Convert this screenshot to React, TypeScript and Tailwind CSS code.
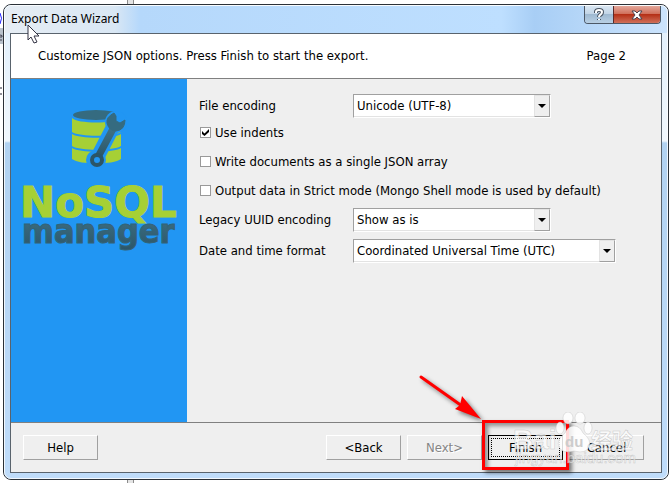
import { useState } from 'react'
import type { ReactNode } from 'react'
import { clsx } from 'clsx'

const BODY_FONT = "font-['Tahoma','DejaVu_Sans_Condensed','DejaVu_Sans',sans-serif]"

interface SelectRowProps {
  id: string
  label: string
  options: string[]
  wide?: boolean
}

function SelectRow({ id, label, options, wide }: SelectRowProps) {
  const [value, setValue] = useState(options[0])
  return (
    <div className="flex items-center">
      <label htmlFor={id} className="w-[154px] shrink-0">{label}</label>
      <div
        className={clsx(
          'relative h-6 border border-t-[#a0a0a0] border-l-[#a0a0a0] border-r-white border-b-white bg-white',
          wide ? 'w-[263px]' : 'w-[198px]'
        )}
      >
        <select
          id={id}
          value={value}
          onChange={e => setValue(e.target.value)}
          className="block h-full w-full appearance-none border-b border-[#e3e3e3] bg-white pl-[3px] pr-5 leading-5 outline-none"
        >
          {options.map(o => <option key={o}>{o}</option>)}
        </select>
        <span className="pointer-events-none absolute top-0 right-0 bottom-0 flex w-4 items-center justify-center border border-t-[#e3e3e3] border-l-[#e3e3e3] border-r-[#a0a0a0] border-b-[#a0a0a0] bg-[#efefef]">
          <svg width="8" height="4" viewBox="0 0 8 4" aria-hidden="true">
            <path d="M0 0h8L4 4z" fill="#000" />
          </svg>
        </span>
      </div>
    </div>
  )
}

function CheckRow({ label, checked: initial = false }: { label: string; checked?: boolean }) {
  const [checked, setChecked] = useState(initial)
  return (
    <label className="flex h-[29px] items-center gap-1">
      <span className="relative ml-px size-[11px]">
        <input
          type="checkbox"
          checked={checked}
          onChange={e => setChecked(e.target.checked)}
          className="block size-[11px] appearance-none border border-[#999] bg-white"
        />
        {checked && (
          <svg className="pointer-events-none absolute inset-0" width="11" height="11" viewBox="0 0 11 11" aria-hidden="true">
            <path d="M2 4l2.500 2.500L9 2v3L4.500 9 2 7z" fill="#000" />
          </svg>
        )}
      </span>
      {label}
    </label>
  )
}

function WizardButton({ children, disabled, focused }: { children: ReactNode; disabled?: boolean; focused?: boolean }) {
  return (
    <button
      disabled={disabled}
      className={clsx(
        'h-[25px] w-[75px] border bg-[#efefef]',
        focused
          ? 'border-black p-[2px]'
          : 'border-t-white border-l-white border-r-[#a0a0a0] border-b-[#a0a0a0]',
        disabled && 'text-[#858585] [text-shadow:1px_1px_0_white]'
      )}
    >
      {focused ? (
        <span className="flex h-full items-center justify-center border border-dotted border-black">{children}</span>
      ) : children}
    </button>
  )
}

function Logo() {
  return (
    <svg width="176" height="152" viewBox="0 0 176 152" aria-label="NoSQL manager">
      <defs>
        <linearGradient id="steel" x1="0" y1="0" x2="0" y2="1">
          <stop offset="0" stopColor="#3f7388" />
          <stop offset="1" stopColor="#2b5567" />
        </linearGradient>
      </defs>
      <g fill="#a6d035">
        <path d="M61 18c5 6 43 6 49 0v14c-8 5-41 5-49 0z" />
        <path d="M61 34c8 5 41 5 49 0v12c-8 5-41 5-49 0z" />
        <path d="M61 48c8 5 41 5 49 0v11c-8 6-41 6-49 0z" />
      </g>
      <ellipse cx="85" cy="15" rx="23" ry="5" fill="#356b80" />
      <g strokeLinejoin="round">
        <path d="M86 58 102 27" stroke="#2196f3" strokeWidth="14" strokeLinecap="round" />
        <circle cx="85" cy="60" r="10" fill="#2196f3" />
        <circle cx="105" cy="22" r="11" fill="#2196f3" />
        <path d="M87 57 103 27" stroke="url(#steel)" strokeWidth="7" />
        <path d="M103 13q-8 4-7 10 2 8 9 8 9-1 9-11l-5 3-4-2v-5z" fill="#356b80" stroke="#356b80" />
        <circle cx="86" cy="60" r="5" fill="#2196f3" stroke="#2b5567" strokeWidth="4" />
      </g>
      <g fontWeight="bold">
        <text x="9" y="117" fontFamily="DejaVu Sans, sans-serif" fontSize="42" fill="#a6d035" stroke="#a6d035">NoSQL</text>
        <text x="11" y="143" fontFamily="DejaVu Sans Condensed, DejaVu Sans, sans-serif" fontSize="34" fill="url(#steel)" stroke="#336378">manager</text>
      </g>
    </svg>
  )
}

function Watermark() {
  return (
    <svg
      className="pointer-events-none absolute -right-[76px] -bottom-2"
      width="130"
      height="56"
      viewBox="0 0 130 56"
      aria-hidden="true"
    >
      <g fill="#fff" fillOpacity=".65" stroke="#aaa" strokeOpacity=".6" strokeWidth=".5">
        <text x="4" y="37" fontSize="28" fontFamily="Liberation Sans, sans-serif" fontWeight="bold">Bai</text>
        <g fillOpacity=".85">
          <ellipse cx="51" cy="16" rx="4" ry="6" />
          <ellipse cx="59" cy="6" rx="5" ry="6" />
          <ellipse cx="71" cy="6" rx="5" ry="6" />
          <ellipse cx="79" cy="16" rx="4" ry="6" />
          <path d="M65 14q6 0 9 7 9 7 6 14-3 7-15 4-12 3-15-4-3-7 6-14 3-7 9-7z" />
        </g>
        <text x="82" y="36" fontSize="21" fontFamily="'Noto Sans CJK SC', sans-serif" fontWeight="bold">经验</text>
        <text x="6" y="51" fontSize="15" fontFamily="Liberation Sans, sans-serif">jingyan.baidu.com</text>
      </g>
      <text x="56" y="35" fontSize="15" fill="#ccc" fontFamily="Liberation Sans, sans-serif" fontWeight="bold">du</text>
    </svg>
  )
}

function Callout() {
  return (
    <>
      <svg className="pointer-events-none absolute right-[80px] bottom-[38px] drop-shadow-[3px_3px_2px_rgba(0,0,0,0.5)]" width="64" height="50" viewBox="0 0 64 50" aria-hidden="true">
        <path d="M2 5 43 34" stroke="#f00" strokeWidth="3" strokeLinecap="round" />
        <path d="M62 47 36 37l5-4 2-9z" fill="#f00" />
      </svg>
      <span className="pointer-events-none absolute -inset-x-[6px] -top-[15px] -bottom-[10px] border-[3px] border-[#f00] shadow-[3px_3px_4px_rgba(0,0,0,0.5),inset_3px_3px_4px_rgba(0,0,0,0.4)]" />
    </>
  )
}

function Cursor() {
  return (
    <svg className="pointer-events-none absolute top-[18px] left-[22px] z-10" width="13" height="20" viewBox="0 0 13 20" aria-hidden="true">
      <path d="M1 1v15l3-3 3 6 3-1-3-6h5z" fill="#fff" stroke="#334" strokeLinejoin="round" />
    </svg>
  )
}

// edge of the scroll bar that sticks out behind the dialog
function ScrollEdge() {
  return <div className="ml-[127px] w-[7px] border-x border-[#8c8c8c] bg-[#e4e4e4]" />
}

export default function App() {
  return (
    <div className={clsx('flex min-h-screen flex-col bg-white text-[13px] leading-4 text-black', BODY_FONT)}>
      <div className="flex h-1"><ScrollEdge /></div>
      <div className="flex flex-1 pr-[3px]">
        <svg width="3" height="100" viewBox="0 0 3 100" aria-hidden="true">
          <path d="M0 9q3 5 0 11" fill="none" stroke="#22f" />
          <path d="M0 24h3v16H0z" fill="#b9c2cc" />
          <path d="M0 31q3 0 2 2H0M0 36h2" fill="none" stroke="#445" />
          <path d="M0 84h2M0 90h2" stroke="#223" />
        </svg>
        <div className="flex flex-1 flex-col rounded-lg border border-[#2b3138] bg-[linear-gradient(#e0effc,#f0f7fd_136px,#b1d2f1_138px,#bfdcfa)]">
          <div className="flex flex-1 flex-col rounded-[7px] border border-white/80 px-[5px] pb-[5px]">
            <header className="relative -mx-[5px] flex h-[27px] items-start rounded-t-md bg-[linear-gradient(90deg,#e6edf4,#d9e7f4_110px,#b5d8fb_135px,#bedfff_75%,#a8cef5_80%,#cce4fd)] px-[6px]">
              <h1 className="flex-1 pt-[3px] font-['Segoe_UI','Noto_Sans',sans-serif] text-[12px] leading-5">Export Data Wizard</h1>
              <Cursor />
              <div className="flex h-[18px] overflow-hidden rounded-b border border-t-0 border-[#4c5866]">
                <button aria-label="Help" className="flex w-7 items-center justify-center bg-[linear-gradient(#d9e6f2,#c0d3e5_50%,#9fb9d1_50%,#b9d0e4)]">
                  <svg width="12" height="14" viewBox="0 0 12 14" aria-hidden="true">
                    <path d="M3 5V4q0-2 3-2t3 2q0 2-2 3-1 1-1 2M6 11v1" fill="none" stroke="#4b5563" strokeWidth="4" />
                    <path d="M3 5V4q0-2 3-2t3 2q0 2-2 3-1 1-1 2M6 11v1" fill="none" stroke="#fff" strokeWidth="2" />
                  </svg>
                </button>
                <button aria-label="Close" className="flex w-[47px] items-center justify-center border-l border-[#5c2a2a] bg-[linear-gradient(#e3a79b,#cf6b55_50%,#b53017_50%,#d0705a)]">
                  <svg width="12" height="10" viewBox="0 0 12 10" aria-hidden="true">
                    <path d="M1 1h3l2 2 2-2h3L8 5l3 4H8L6 7 4 9H1l3-4z" fill="#fff" stroke="#4b4450" />
                  </svg>
                </button>
              </div>
            </header>

            <main className="flex flex-1 flex-col border border-[#59636d] bg-[#efefef]">
              <div className="flex h-[45px] items-center justify-between border-b border-[#808080] bg-white pr-[35px] pl-[27px]">
                <p>Customize JSON options. Press Finish to start the export.</p>
                <p>Page 2</p>
              </div>

              <div className="flex flex-1">
                <aside className="w-[176px] shrink-0 bg-[#2196f3] pt-[21px]">
                  <Logo />
                </aside>
                <form className="flex-1 pt-[15px] pl-3">
                  <SelectRow id="encoding" label="File encoding" options={['Unicode (UTF-8)', 'Unicode (UTF-16)', 'ANSI']} />
                  <CheckRow label="Use indents" checked />
                  <CheckRow label="Write documents as a single JSON array" />
                  <CheckRow label="Output data in Strict mode (Mongo Shell mode is used by default)" />
                  <div className="flex flex-col gap-[7px] pt-[3px]">
                    <SelectRow id="uuid" label="Legacy UUID encoding" options={['Show as is', 'Java', 'C#', 'Python']} />
                    <SelectRow id="datetime" label="Date and time format" options={['Coordinated Universal Time (UTC)', 'Local time']} wide />
                  </div>
                </form>
              </div>

              <footer className="flex h-[50px] items-center gap-[6px] border-t border-[#808080] pr-[17px] pl-3">
                <WizardButton>Help</WizardButton>
                <span className="flex-1" />
                <WizardButton>&lt;Back</WizardButton>
                <WizardButton disabled>Next&gt;</WizardButton>
                <div className="relative z-10 flex">
                  <WizardButton focused>Finish</WizardButton>
                  <Callout />
                  <Watermark />
                </div>
                <WizardButton>Cancel</WizardButton>
              </footer>
            </main>
          </div>
        </div>
      </div>
      <div className="flex h-[3px]"><ScrollEdge /></div>
    </div>
  )
}
